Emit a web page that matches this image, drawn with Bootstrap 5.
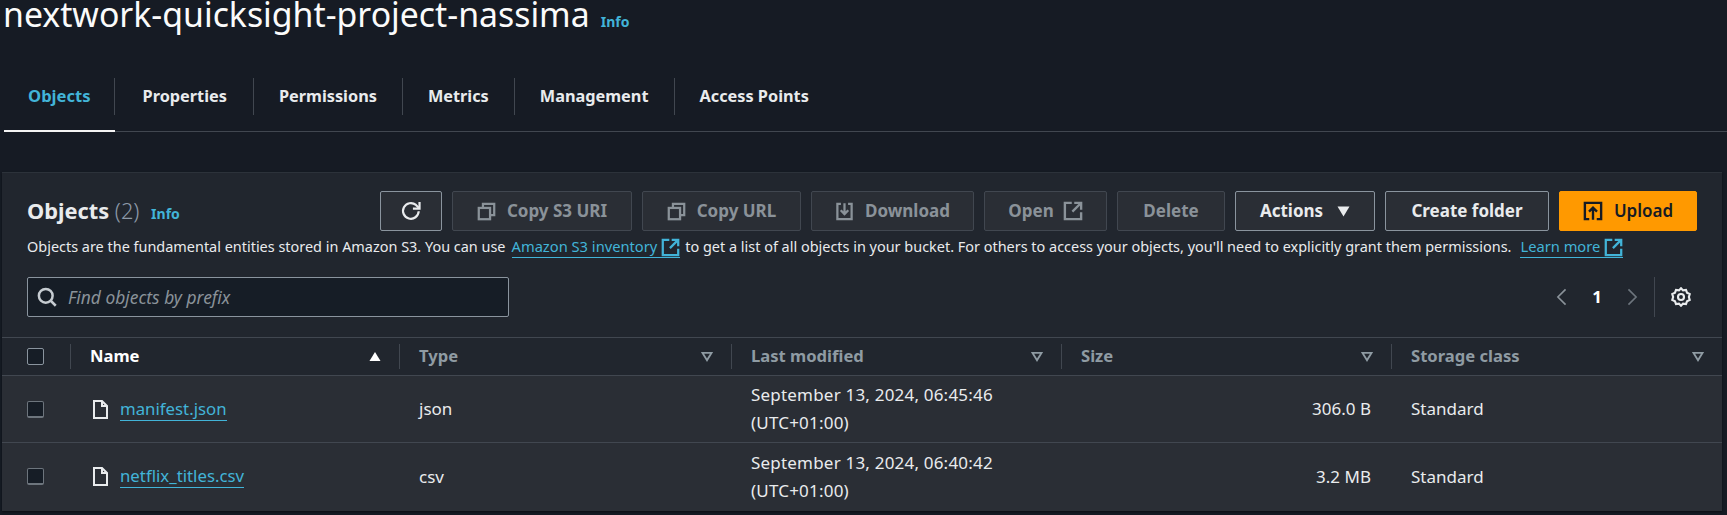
<!DOCTYPE html>
<html lang="en">
<head>
  <meta charset="UTF-8" />
  <title>nextwork-quicksight-project-nassima</title>
  <meta name="viewport" content="width=device-width, initial-scale=1" />
  <link href="https://cdn.jsdelivr.net/npm/bootstrap@5.3.3/dist/css/bootstrap.min.css" rel="stylesheet" />
  <style>
    html, body { height: 515px; overflow: hidden; }
    body { background: #161b24; color: #e9ebed; font-family: "Noto Sans", sans-serif; font-size: 14.45px; }
    a { color: #42b4d8; }
    svg { display: block; flex: none; }

    .bucket-title { font-size: 33.8px; font-weight: 400; line-height: 28px; margin: 0 0 0 3px; height: 30px; color: #fbfbfb; white-space: nowrap; }
    .info-link { font-size: 14px; font-weight: 700; text-decoration: none; color: #42b4d8; }
    .bucket-title .info-link { margin-left: 11px; }

    .tab-strip { margin: 43px 0 0 4px; height: 59px; border-bottom: 1px solid #414750; flex-wrap: nowrap; }
    .tab-item { height: 58px; padding: 5px 0 0; position: relative; }
    .tab-item a { display: flex; align-items: center; height: 37px; padding: 0 25px; color: #e9ebed; font-size: 16.3px; font-weight: 700; text-decoration: none; border-right: 1px solid #414750; }
    .tab-item:first-child a { padding: 0 23px 0 24px; font-size: 16.6px; }
    .tab-item:nth-child(2) a { padding: 0 26px 0 28px; }
    .tab-item:last-child a { border-right: 0; }
    .tab-item.on a { color: #42b4d8; }
    .tab-item.on::after { content: ""; position: absolute; left: 0; right: 0; bottom: -1px; height: 2px; background: #f4f4f4; }

    .bucket-panel { margin: 40px 5px 0 2px; height: 339px; background: #21262e; border-top: 1px solid #2c323a; box-shadow: 0 1px 2px #0b0e13; }
    .panel-top { padding: 18px 25px 0 25px; height: 59px; }
    .panel-title { font-size: 21.8px; font-weight: 700; line-height: 40px; margin: 0; white-space: nowrap; }
    .panel-title span { font-weight: 300; color: #8d99a8; }
    .panel-title .info-link { margin-left: 6px; font-size: 14px; font-weight: 700; color: #42b4d8; }

    .panel-actions { gap: 10px; }
    .aws-btn { display: flex; align-items: center; justify-content: center; gap: 11px; height: 40px; padding: 0; border-radius: 2px; border: 1px solid #8a949e; background: #2a2e35; color: #e9ebed; font-size: 17px; font-weight: 700; white-space: nowrap; }
    .aws-btn:disabled { opacity: 1; background: #2a2e35; border-color: #414750; color: #8a9299; }
    .aws-btn.go { background: #ff9900; border-color: #ff9900; color: #161b24; font-weight: 600; }
    .w-refresh { width: 62px; } .w-s3 { width: 180px; } .w-url { width: 159px; } .w-down { width: 163px; }
    .w-open { width: 123px; gap: 9px; } .w-del { width: 108px; } .w-act { width: 140px; gap: 14px; } .w-new { width: 164px; } .w-up { width: 138px; }

    .panel-desc { margin: 5px 0 0 25px; line-height: 20px; height: 20px; white-space: nowrap; color: #e9ebed; display: flex; align-items: center; }
    .panel-desc a { text-decoration: none; color: #42b4d8; border-bottom: 1px solid #42b4d8; font-size: 14.7px; line-height: 19px; display: inline-flex; align-items: center; gap: 4px; height: 21px; margin: 0 5px 0 6px; }
    .panel-desc a.tail { margin: 0 0 0 9px; }
    .panel-desc svg { margin-bottom: -1px; }

    .search-row { margin: 20px 31px 0 25px; height: 40px; }
    .search-box { width: 482px; height: 40px; position: relative; }
    .search-box svg { position: absolute; left: 10px; top: 10px; }
    .search-box .form-control { height: 40px; border-radius: 2px; background: #161d26; border: 1px solid #8a949e; padding-left: 40px; font-size: 17.4px; font-style: italic; color: #e9ebed; box-shadow: none; }
    .search-box .form-control::placeholder { color: #8a9299; opacity: 1; }
    .pager { color: #fff; font-weight: 700; font-size: 16.8px; }
    .pager-num { width: 60px; text-align: center; }
    .pager-gear { border-left: 1px solid #414750; height: 40px; margin-left: 16px; padding-left: 16px; display: flex; align-items: center; }

    .obj-table { --bs-table-bg: transparent; --bs-table-color: #e9ebed; --bs-table-border-color: #414750; margin: 20px 0 0; table-layout: fixed; font-size: 17px; border-top: 1px solid #414750; }
    .obj-table th { height: 38px; padding: 0 18px 0 20px; vertical-align: middle; font-size: 16.6px; font-weight: 700; color: #8f9ba3; background: #21262e; position: relative; border-bottom: 1px solid #414750; }
    .obj-table th.act { color: #fff; }
    .obj-table th + th::before { content: ""; position: absolute; left: 0; top: 6px; bottom: 6px; width: 1px; background: #414750; }
    .obj-table td { padding: 0 20px; vertical-align: middle; background: #2a2e35; border-bottom: 1px solid #414750; line-height: 28px; height: 67px; }
    .obj-table tr:last-child td { border-bottom: 0; height: 68px; }
    .col-check { width: 68px; } .col-name { width: 329px; } .col-type { width: 332px; } .col-date { width: 330px; } .col-size { width: 330px; }
    .obj-table .col-check { padding-left: 25px; }
    .date-text { letter-spacing: .2px; }
    .head-in { display: flex; align-items: center; justify-content: space-between; }
    .fake-check { display: block; width: 17px; height: 17px; border: 1px solid #8a949e; border-radius: 2px; background: #161d26; }
    td .fake-check { border-bottom-width: 2px; border-color: #6d757d; }
    .file-cell { display: flex; align-items: center; gap: 12px; padding-left: 3px; }
    .file-cell a { text-decoration: none; border-bottom: 1px solid #42b4d8; line-height: 22px; font-size: 16.8px; }
  </style>
</head>
<body>

<h1 class="bucket-title d-flex align-items-baseline">nextwork-quicksight-project-nassima <a class="info-link" href="#">Info</a></h1>

<ul class="nav tab-strip">
  <li class="tab-item on"><a href="#">Objects</a></li>
  <li class="tab-item"><a href="#">Properties</a></li>
  <li class="tab-item"><a href="#">Permissions</a></li>
  <li class="tab-item"><a href="#">Metrics</a></li>
  <li class="tab-item"><a href="#">Management</a></li>
  <li class="tab-item"><a href="#">Access Points</a></li>
</ul>

<section class="bucket-panel">
  <div class="panel-top d-flex justify-content-between">
    <h2 class="panel-title">Objects <span>(2)</span> <a class="info-link" href="#">Info</a></h2>
    <div class="d-flex panel-actions">
      <button class="btn aws-btn w-refresh" aria-label="Refresh">
        <svg width="22" height="22" viewBox="0 0 16 16" fill="none" stroke="#e9ebed" stroke-width="1.6"><path d="M13.6 8.2A5.7 5.7 0 1 1 11.6 3.6L14 6"/><path d="M14.2 1.4V6.2H9.4"/></svg>
      </button>
      <button class="btn aws-btn w-s3" disabled>
        <svg width="19" height="19" viewBox="0 0 16 16" fill="none" stroke="#8a9299" stroke-width="1.9"><path d="M5 5V1.5H14.5V11H11"/><rect x="1.5" y="5" width="9.5" height="9.5"/></svg>
        Copy S3 URI
      </button>
      <button class="btn aws-btn w-url" disabled>
        <svg width="19" height="19" viewBox="0 0 16 16" fill="none" stroke="#8a9299" stroke-width="1.9"><path d="M5 5V1.5H14.5V11H11"/><rect x="1.5" y="5" width="9.5" height="9.5"/></svg>
        Copy URL
      </button>
      <button class="btn aws-btn w-down" disabled>
        <svg width="19" height="19" viewBox="0 0 16 16" fill="none" stroke="#8a9299" stroke-width="1.9"><path d="M5 1.5H2V14.5H14V1.5H11"/><path d="M8 1V10M4.8 7L8 10.2L11.2 7"/></svg>
        Download
      </button>
      <button class="btn aws-btn w-open" disabled>
        Open
        <svg width="20" height="20" viewBox="0 0 16 16" fill="none" stroke="#8a9299" stroke-width="1.9"><path d="M7 1.5H1.5V14.5H14.5V9"/><path d="M9 1.5H14.5V7M14 2L7.5 8.5"/></svg>
      </button>
      <button class="btn aws-btn w-del" disabled>Delete</button>
      <button class="btn aws-btn w-act">Actions <svg width="13" height="11" viewBox="0 0 13 11"><path d="M0.5 0.5H12.5L6.5 10.5Z" fill="#e9ebed"/></svg></button>
      <button class="btn aws-btn w-new">Create folder</button>
      <button class="btn aws-btn go w-up">
        <svg width="20" height="20" viewBox="0 0 16 16" fill="none" stroke="#161b24" stroke-width="1.9"><path d="M5 14.5H1.5V1.5H14.5V14.5H11"/><path d="M8 15V5.5M4.8 8.5L8 5.3L11.2 8.5"/></svg>
        Upload
      </button>
    </div>
  </div>

  <p class="panel-desc mb-0">Objects are the fundamental entities stored in Amazon S3. You can use
    <a href="#">Amazon S3 inventory
      <svg width="19" height="19" viewBox="0 0 16 16" fill="none" stroke="#42b4d8" stroke-width="1.9"><path d="M7 1.5H1.5V14.5H14.5V9"/><path d="M9 1.5H14.5V7M14 2L7.5 8.5"/></svg></a>
    to get a list of all objects in your bucket. For others to access your objects, you'll need to explicitly grant them permissions.
    <a class="tail" href="#">Learn more
      <svg width="19" height="19" viewBox="0 0 16 16" fill="none" stroke="#42b4d8" stroke-width="1.9"><path d="M7 1.5H1.5V14.5H14.5V9"/><path d="M9 1.5H14.5V7M14 2L7.5 8.5"/></svg></a>
  </p>

  <div class="search-row d-flex justify-content-between align-items-center">
    <div class="search-box">
      <svg width="20" height="20" viewBox="0 0 16 16" fill="none" stroke="#c6ccd1" stroke-width="2"><circle cx="7" cy="7" r="5.5"/><path d="M11 11L15 15"/></svg>
      <input type="text" class="form-control" placeholder="Find objects by prefix" />
    </div>
    <div class="pager d-flex align-items-center">
      <svg width="11" height="18" viewBox="0 0 12 20" fill="none" stroke="#8a9299" stroke-width="1.8"><path d="M10.5 1.5L2 10L10.5 18.5"/></svg>
      <span class="pager-num">1</span>
      <svg width="11" height="18" viewBox="0 0 12 20" fill="none" stroke="#6d757d" stroke-width="1.8"><path d="M1.5 1.5L10 10L1.5 18.5"/></svg>
      <div class="pager-gear">
        <svg width="20" height="20" viewBox="0 0 16 16" fill="none" stroke="#e9ebed" stroke-width="1.7"><path d="M8 1L9.6 2.7L12 2.3L12.8 4.5L15 5.6L14.3 8L15 10.4L12.8 11.5L12 13.7L9.6 13.3L8 15L6.4 13.3L4 13.7L3.2 11.5L1 10.4L1.7 8L1 5.6L3.2 4.5L4 2.3L6.4 2.7Z"/><circle cx="8" cy="8" r="2.4"/></svg>
      </div>
    </div>
  </div>

  <table class="table obj-table">
    <thead>
      <tr>
        <th class="col-check"><span class="fake-check"></span></th>
        <th class="col-name act"><div class="head-in">Name <svg width="12" height="11" viewBox="0 0 13 11"><path d="M0.5 10.5H12.5L6.5 0.5Z" fill="#fff"/></svg></div></th>
        <th class="col-type"><div class="head-in">Type <svg width="12" height="11" viewBox="0 0 13 11" fill="none" stroke="#8f9ba3" stroke-width="2"><path d="M1.5 1.5H11.5L6.5 9.5Z"/></svg></div></th>
        <th class="col-date"><div class="head-in">Last modified <svg width="12" height="11" viewBox="0 0 13 11" fill="none" stroke="#8f9ba3" stroke-width="2"><path d="M1.5 1.5H11.5L6.5 9.5Z"/></svg></div></th>
        <th class="col-size"><div class="head-in">Size <svg width="12" height="11" viewBox="0 0 13 11" fill="none" stroke="#8f9ba3" stroke-width="2"><path d="M1.5 1.5H11.5L6.5 9.5Z"/></svg></div></th>
        <th><div class="head-in">Storage class <svg width="12" height="11" viewBox="0 0 13 11" fill="none" stroke="#8f9ba3" stroke-width="2"><path d="M1.5 1.5H11.5L6.5 9.5Z"/></svg></div></th>
      </tr>
    </thead>
    <tbody>
      <tr>
        <td class="col-check"><span class="fake-check"></span></td>
        <td><div class="file-cell">
          <svg width="15" height="19" viewBox="0 0 15 19" fill="none" stroke="#e9ebed" stroke-width="2"><path d="M1 1H9L14 6V18H1Z"/><path d="M9 1V6H14"/></svg>
          <a href="#">manifest.json</a></div></td>
        <td>json</td>
        <td class="date-text">September 13, 2024, 06:45:46<br />(UTC+01:00)</td>
        <td class="text-end">306.0 B</td>
        <td>Standard</td>
      </tr>
      <tr>
        <td class="col-check"><span class="fake-check"></span></td>
        <td><div class="file-cell">
          <svg width="15" height="19" viewBox="0 0 15 19" fill="none" stroke="#e9ebed" stroke-width="2"><path d="M1 1H9L14 6V18H1Z"/><path d="M9 1V6H14"/></svg>
          <a href="#">netflix_titles.csv</a></div></td>
        <td>csv</td>
        <td class="date-text">September 13, 2024, 06:40:42<br />(UTC+01:00)</td>
        <td class="text-end">3.2 MB</td>
        <td>Standard</td>
      </tr>
    </tbody>
  </table>
</section>

<script src="https://cdn.jsdelivr.net/npm/bootstrap@5.3.3/dist/js/bootstrap.bundle.min.js"></script>
</body>
</html>
